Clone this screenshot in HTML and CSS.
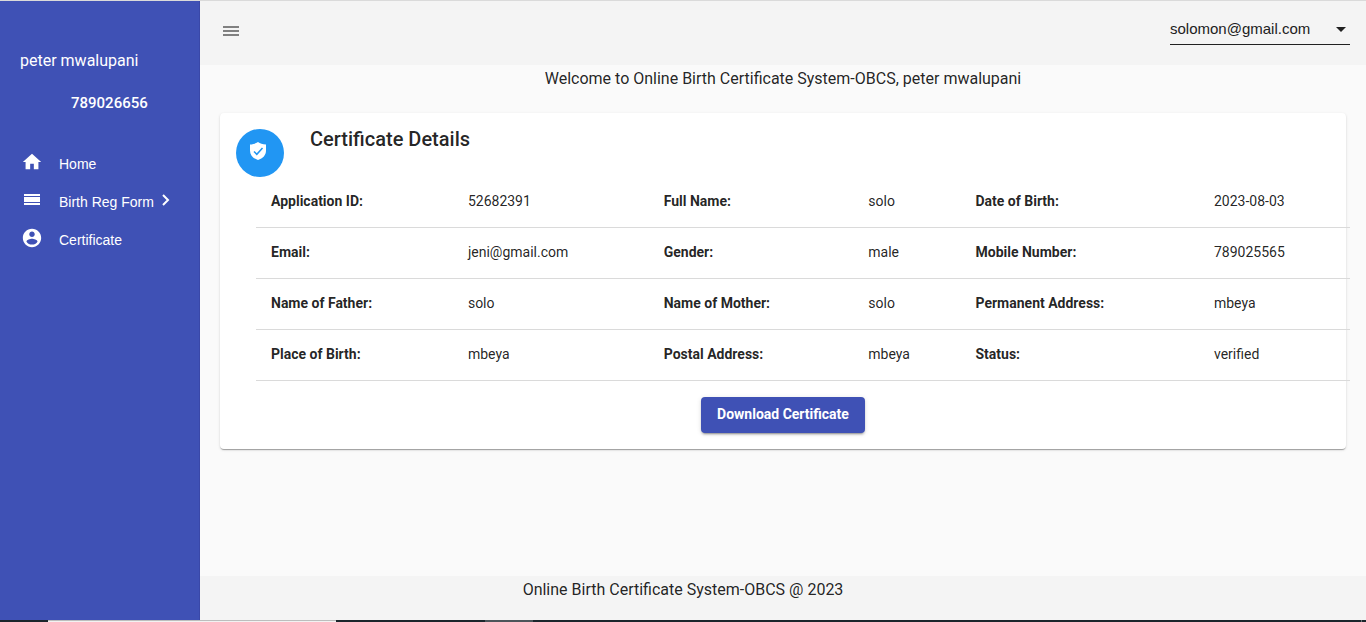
FILE: index.html
```html
<!DOCTYPE html>
<html lang="en">
<head>
<meta charset="utf-8">
<meta name="viewport" content="width=device-width, initial-scale=1">
<title>Online Birth Certificate System</title>
<link rel="stylesheet" href="styles.css">
</head>
<body>
<div class="app">
  <aside class="sidebar">
    <div class="profile">
      <div class="profile-name">peter mwalupani</div>
      <div class="profile-phone">789026656</div>
    </div>
    <nav class="menu">
      <a class="menu-item" href="#">
        <svg class="menu-icon" viewBox="0 0 24 24" aria-hidden="true"><path d="M10 20v-6h4v6h5v-8h3L12 3 2 12h3v8z"/></svg>
        <span>Home</span>
      </a>
      <a class="menu-item" href="#">
        <svg class="menu-icon" viewBox="0 0 22 22" aria-hidden="true"><path d="M3 5h16v2H3zM3 8h16v5H3zM3 14h16v2H3z"/></svg>
        <span>Birth Reg Form</span>
        <svg class="menu-arrow" viewBox="0 0 12 14" aria-hidden="true"><path d="M3 2l5 5-5 5"/></svg>
      </a>
      <a class="menu-item" href="#">
        <svg class="menu-icon" viewBox="0 0 24 24" aria-hidden="true"><path d="M12 2C6.480 2 2 6.480 2 12s4.480 10 10 10 10-4.480 10-10S17.520 2 12 2zm0 3c1.660 0 3 1.340 3 3s-1.340 3-3 3-3-1.340-3-3 1.340-3 3-3zm0 14.200c-2.500 0-4.710-1.280-6-3.220.030-1.990 4-3.080 6-3.080 1.990 0 5.970 1.090 6 3.080-1.290 1.940-3.500 3.220-6 3.220z"/></svg>
        <span>Certificate</span>
      </a>
    </nav>
  </aside>
  <div class="page">
    <header class="toolbar">
      <button class="menu-button" type="button" aria-label="Toggle menu">
        <svg viewBox="0 0 16 10" aria-hidden="true"><path d="M0 0h16v2H0zM0 4h16v2H0zM0 8h16v2H0z"/></svg>
      </button>
      <div class="account">
        <select class="account-select" aria-label="Account"><option>solomon@gmail.com</option></select>
        <svg class="account-arrow" viewBox="0 0 10 5" aria-hidden="true"><path d="M0 0h10L5 5z"/></svg>
      </div>
    </header>
    <main class="content">
      <p class="welcome">Welcome to Online Birth Certificate System-OBCS, peter mwalupani</p>
      <section class="card">
        <div class="card-header">
          <div class="avatar">
            <svg viewBox="0 0 24 24" aria-hidden="true"><path class="shield" d="M12 3c-2 1.500-4.500 2.200-8 2.500v6C4 16 7 19.500 12 21c5-1.500 8-5 8-9.500v-6C16.500 5.200 14 4.500 12 3z"/><path class="check" d="M8 12.500l2.800 2.800L16.500 9"/></svg>
          </div>
          <h1 class="card-title">Certificate Details</h1>
        </div>
        <table class="details">
          <colgroup><col class="c1"><col class="c2"><col class="c3"><col class="c4"><col class="c5"><col class="c6"></colgroup>
          <tbody>
            <tr><th scope="row">Application ID:</th><td>52682391</td><th scope="row">Full Name:</th><td>solo</td><th scope="row">Date of Birth:</th><td>2023-08-03</td></tr>
            <tr><th scope="row">Email:</th><td>jeni@gmail.com</td><th scope="row">Gender:</th><td>male</td><th scope="row">Mobile Number:</th><td>789025565</td></tr>
            <tr><th scope="row">Name of Father:</th><td>solo</td><th scope="row">Name of Mother:</th><td>solo</td><th scope="row">Permanent Address:</th><td>mbeya</td></tr>
            <tr><th scope="row">Place of Birth:</th><td>mbeya</td><th scope="row">Postal Address:</th><td>mbeya</td><th scope="row">Status:</th><td>verified</td></tr>
          </tbody>
        </table>
        <div class="actions"><button class="download" type="button">Download Certificate</button></div>
      </section>
    </main>
    <footer class="footer">Online Birth Certificate System-OBCS @ 2023</footer>
  </div>
</div>
<div class="taskbar"><span class="task-start"></span><span class="task-search"></span><span class="task-gap"></span><span class="task-active"></span><span class="task-rest"></span></div>
</body>
</html>
```

FILE: styles.css
```css
* { box-sizing: border-box; }

body {
  margin: 0;
  min-height: 100vh;
  display: flex;
  flex-direction: column;
  font-family: Roboto, sans-serif;
  font-size: 14px;
  color: rgba(0, 0, 0, 0.87);
  background: #fafafa;
}

.app {
  flex: 1;
  display: flex;
  border-top: 1px solid #dadada;
}

.sidebar {
  width: 200px;
  flex: none;
  background: #3f51b5;
  border-right: 1px solid #3a48a8;
  color: #fff;
}

.profile {
  padding: 48px 20px 0;
  font-size: 16px;
  line-height: 24px;
}

.profile-phone {
  margin-top: 18px;
  padding-left: 51px;
  font-size: 15px;
  font-weight: 500;
}

.menu { margin-top: 30px; }

.menu-item {
  display: flex;
  align-items: center;
  height: 38px;
  padding-left: 21px;
  font-family: "Liberation Sans", Arial, sans-serif;
  font-size: 14px;
  color: #fff;
  text-decoration: none;
}

.menu-icon {
  width: 22px;
  height: 22px;
  margin-right: 16px;
  margin-bottom: 4px;
  fill: currentColor;
}

.menu-arrow {
  width: 12px;
  height: 14px;
  margin-left: 6px;
  margin-bottom: 4px;
  fill: none;
  stroke: currentColor;
  stroke-width: 2;
}

.page {
  flex: 1;
  min-width: 0;
  display: flex;
  flex-direction: column;
}

.toolbar {
  height: 64px;
  display: flex;
  align-items: center;
  justify-content: space-between;
  padding: 0 16px 4px;
  background: #f4f4f4;
}

.menu-button {
  padding: 7px;
  border: 0;
  background: none;
  line-height: 0;
}

.menu-button svg {
  width: 16px;
  height: 10px;
  fill: #808080;
}

.account {
  position: relative;
  width: 180px;
  margin-bottom: 4px;
}

.account-select {
  display: block;
  appearance: none;
  width: 100%;
  height: 32px;
  padding: 0;
  border: 0;
  border-bottom: 1px solid #212121;
  border-radius: 0;
  background: transparent;
  font-family: "Liberation Sans", Arial, sans-serif;
  font-size: 15px;
  color: #212121;
}

.account-arrow {
  position: absolute;
  top: 14px;
  right: 4px;
  width: 10px;
  height: 5px;
  fill: #212121;
  pointer-events: none;
}

.content { flex: 1; padding: 0 20px; }

.welcome {
  margin: 0;
  padding: 2px 0 22px;
  font-size: 16px;
  line-height: 24px;
  text-align: center;
}

.card {
  padding: 16px;
  border-radius: 4px;
  background: #fff;
  box-shadow: 0 2px 1px -1px rgba(0, 0, 0, 0.2), 0 1px 1px rgba(0, 0, 0, 0.14), 0 1px 3px rgba(0, 0, 0, 0.12);
}

.card-header { display: flex; }

.avatar {
  width: 48px;
  height: 48px;
  padding: 10px;
  border-radius: 50%;
  background: #2196f3;
}

.avatar svg { display: block; width: 24px; height: 24px; }
.shield { fill: #fff; }
.check { fill: none; stroke: #2196f3; stroke-width: 1.5; }

.card-title {
  margin: -6px 0 0 26px;
  font-size: 20px;
  line-height: 32px;
  font-weight: 500;
}

.details {
  width: 100%;
  margin-left: 20px;
  table-layout: fixed;
  border-collapse: separate;
  border-spacing: 0;
}

.c1 { width: 18%; }
.c2 { width: 17.9%; }
.c3 { width: 18.7%; }
.c4 { width: 9.8%; }
.c5 { width: 21.8%; }

.details th,
.details td {
  height: 51px;
  padding: 0 0 2px 15px;
  border-bottom: 1px solid #dadada;
  text-align: left;
}

.details th { font-weight: 700; }
.details td { font-weight: 400; }

.actions {
  padding-top: 16px;
  text-align: center;
}

.download {
  display: inline-block;
  vertical-align: top;
  height: 36px;
  padding: 0 16px 2px;
  border: 0;
  border-radius: 4px;
  background: #3f51b5;
  box-shadow: 0 3px 1px -2px rgba(0, 0, 0, 0.2), 0 2px 2px rgba(0, 0, 0, 0.14), 0 1px 5px rgba(0, 0, 0, 0.12);
  color: #fff;
  font-family: inherit;
  font-size: 14px;
  font-weight: 700;
}

.footer {
  height: 44px;
  padding: 2px 200px 0 0;
  background: #f4f4f4;
  font-size: 16px;
  line-height: 24px;
  text-align: center;
}

.taskbar {
  display: flex;
  height: 2px;
  background: #1b262c;
}

.task-start { width: 48px; }
.task-search { width: 288px; background: #f2f2f2; border-top: 1px solid #bdbdbd; }
.task-gap { width: 149px; }
.task-active { width: 48px; background: #4c555a; }
.task-rest { flex: 1; margin-right: 4px; border-right: 1px solid #6c7478; }
```
